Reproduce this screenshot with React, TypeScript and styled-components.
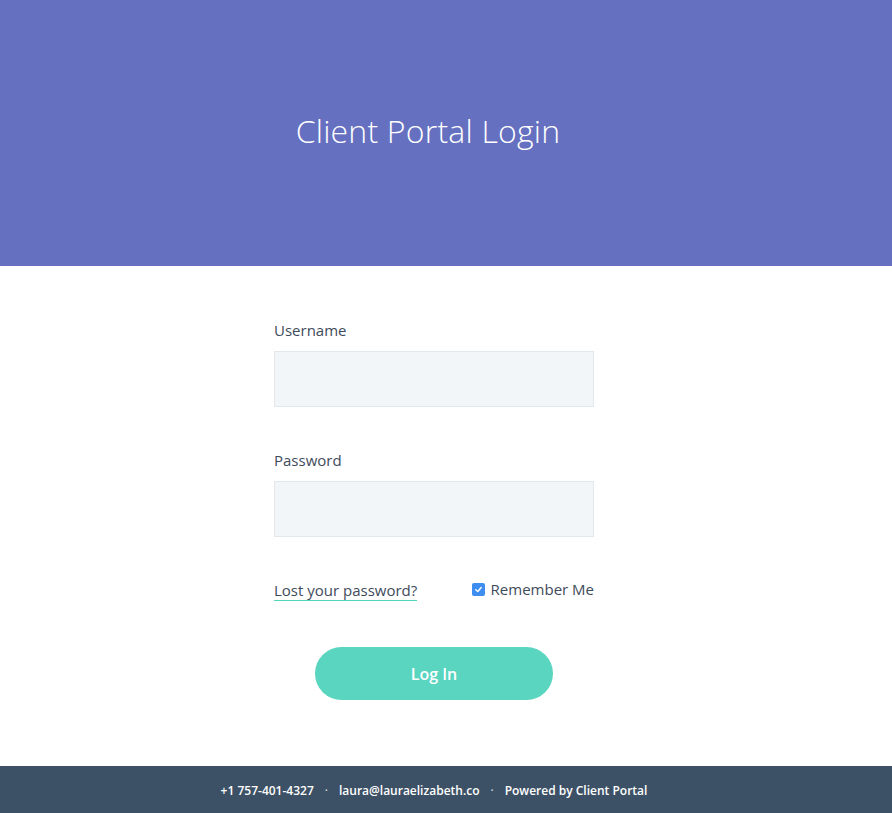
import React from "react";
import styled, { createGlobalStyle } from "styled-components";

const Global = createGlobalStyle`
  html, body { margin: 0; padding: 0; background: #ffffff; }
  body { font-family: "Open Sans", "Liberation Sans", sans-serif; color: #3e4b5b; }
  * { box-sizing: border-box; }
`;

const Page = styled.div`
  min-height: 813px;
  display: flex;
  flex-direction: column;
`;

const Header = styled.header`
  height: 266px;
  background: #6570c0;
  display: flex;
  align-items: center;
  justify-content: center;
  padding: 0 36px 6px 0;
`;

const Title = styled.h1`
  margin: 0;
  font-family: "Open Sans", sans-serif;
  font-weight: 300;
  font-size: 32px;
  color: #ffffff;
  letter-spacing: 0.2px;
`;

const Main = styled.main`
  flex: 1;
  display: flex;
  flex-direction: column;
  align-items: center;
  padding: 53px 24px 66px 0;
`;

const Form = styled.form`
  width: 320px;
  display: flex;
  flex-direction: column;
`;

const Field = styled.div`
  display: flex;
  flex-direction: column;
  gap: 10px;
  margin-bottom: 42px;
`;

const Label = styled.label`
  font-size: 15px;
  line-height: 22px;
  color: #3e4b5b;
`;

const Input = styled.input`
  height: 56px;
  width: 100%;
  background: #f3f6f8;
  border: 1px solid #e3e8ec;
  outline: none;
  font: inherit;
  padding: 0 14px;
`;

const Row = styled.div`
  display: flex;
  justify-content: space-between;
  align-items: center;
  height: 22px;
  margin-top: -1px;
`;

const LostLink = styled.a`
  font-size: 15px;
  line-height: 20px;
  color: #3e4b5b;
  text-decoration: none;
  border-bottom: 1px solid #4fd6bd;
  margin-top: 2px;
`;

const Remember = styled.label`
  display: flex;
  align-items: center;
  gap: 6px;
  font-size: 15px;
  line-height: 22px;
  color: #3e4b5b;
`;

const Box = styled.span`
  width: 13px;
  height: 13px;
  border-radius: 2px;
  background: #3d8ef0;
  display: inline-flex;
  align-items: center;
  justify-content: center;
`;

const Button = styled.button`
  align-self: center;
  margin-top: 47px;
  width: 238px;
  height: 53px;
  border: none;
  border-radius: 27px;
  background: #5ad5bf;
  color: #ffffff;
  font-family: "Open Sans", sans-serif;
  font-weight: 600;
  font-size: 16px;
  cursor: pointer;
`;

const Footer = styled.footer`
  height: 47px;
  background: #3d5166;
  display: flex;
  align-items: center;
  justify-content: center;
  gap: 11px;
  padding: 1px 24px 0 0;
  color: #ffffff;
  font-size: 12px;
  font-weight: 600;
`;

const Dot = styled.span`
  font-weight: 400;
  opacity: 0.85;
`;

export default function App() {
  return (
    <Page>
      <Global />
      <Header>
        <Title>Client Portal Login</Title>
      </Header>
      <Main>
        <Form onSubmit={(e) => e.preventDefault()}>
          <Field>
            <Label htmlFor="u">Username</Label>
            <Input id="u" type="text" />
          </Field>
          <Field>
            <Label htmlFor="p">Password</Label>
            <Input id="p" type="password" />
          </Field>
          <Row>
            <LostLink href="#">Lost your password?</LostLink>
            <Remember>
              <Box>
                <svg width="9" height="9" viewBox="0 0 10 10">
                  <path d="M2 5.2 L4.2 7.3 L8 2.8" stroke="#fff" strokeWidth="1.6" fill="none" strokeLinecap="round" strokeLinejoin="round" />
                </svg>
              </Box>
              Remember Me
            </Remember>
          </Row>
          <Button type="submit">Log In</Button>
        </Form>
      </Main>
      <Footer>
        <span>+1 757-401-4327</span>
        <Dot>·</Dot>
        <span>laura@lauraelizabeth.co</span>
        <Dot>·</Dot>
        <span>Powered by Client Portal</span>
      </Footer>
    </Page>
  );
}
